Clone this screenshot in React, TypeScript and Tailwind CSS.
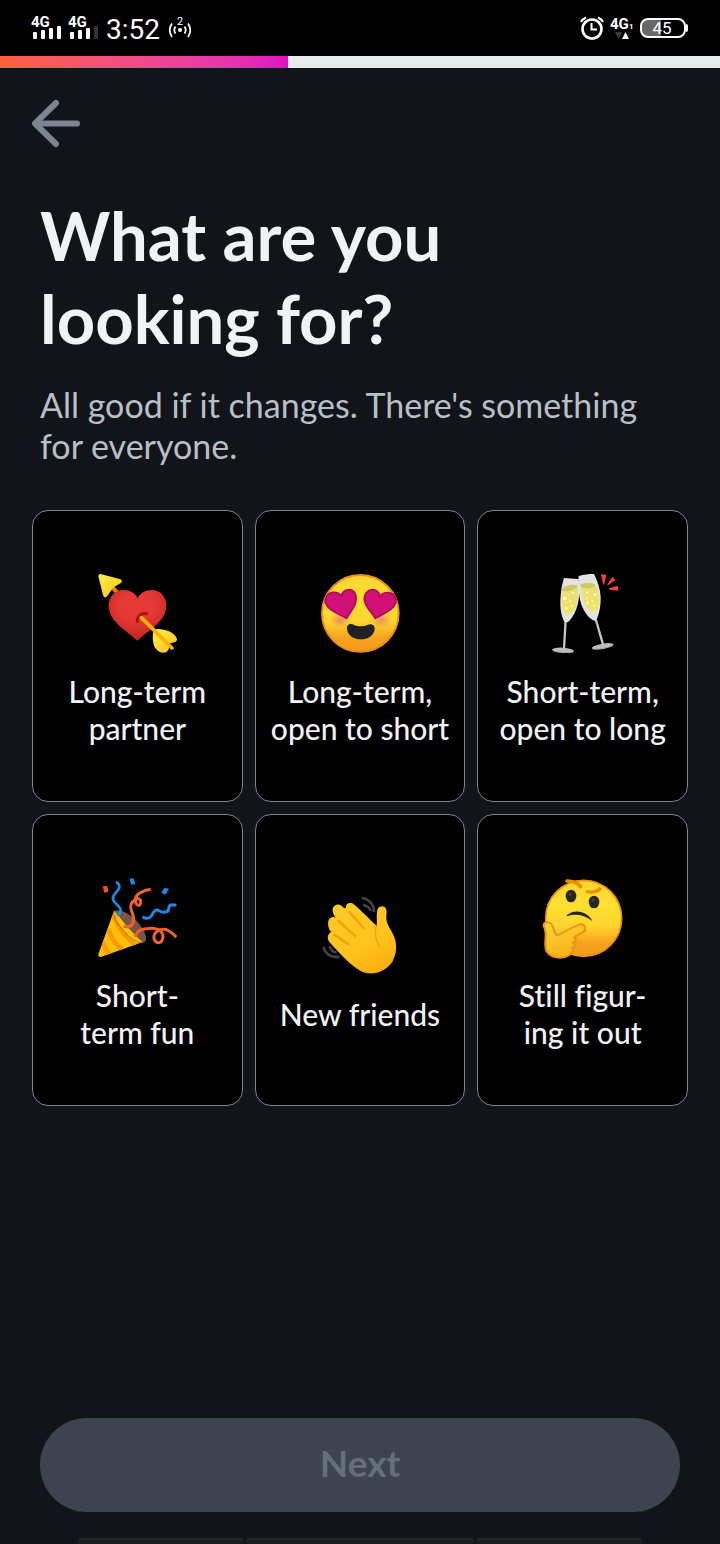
import type { ReactNode } from 'react';

function HeartArrow() {
  return (
    <svg viewBox="53 39 240 240" className="size-20" aria-hidden="true">
      <defs>
        <radialGradient id="ha-heart" cx="0.5" cy="0.3" r="0.75">
          <stop offset="0.4" stopColor="#e53935" />
          <stop offset="1" stopColor="#c01f22" />
        </radialGradient>
        <linearGradient id="ha-gold" x1="0" y1="0" x2="1" y2="1">
          <stop offset="0" stopColor="#fff04a" />
          <stop offset="1" stopColor="#f9c01c" />
        </linearGradient>
      </defs>
      <path d="M95 78L122 106" stroke="#f57c00" strokeWidth="12" />
      <path
        d="M63 42L121 57Q133 62 125 69L108 79Q100 83 96 91L84 108Q75 118 71 105L57 49Q57 42 63 42Z"
        fill="url(#ha-gold)"
      />
      <path
        d="M174 242C138 209 88 183 88 137C88 108 108 90 132 90C152 90 167 99 175 114C183 99 198 90 217 90C242 90 261 109 261 137C261 182 212 208 174 242Z"
        fill="url(#ha-heart)"
      />
      <path d="M174 188C171 168 187 156 206 162" fill="none" stroke="#a31515" strokeWidth="9" />
      <path
        d="M223 208C248 203 286 214 293 237C294 246 282 248 273 249C271 259 268 273 260 277C249 281 234 274 227 263C219 249 219 229 223 208Z"
        fill="url(#ha-gold)"
      />
      <path d="M186 173L278 264" stroke="#ffb300" strokeWidth="11" strokeLinecap="round" />
    </svg>
  );
}

function FaceGradient({ id }: { id: string }) {
  return (
    <linearGradient id={id} x1="0" y1="0" x2="0" y2="1">
      <stop offset="0" stopColor="#fbd431" />
      <stop offset="0.3" stopColor="#fde030" />
      <stop offset="0.6" stopColor="#fdd52f" />
      <stop offset="0.82" stopColor="#f7a31f" />
      <stop offset="1" stopColor="#f59a1d" />
    </linearGradient>
  );
}

function HeartEyes() {
  return (
    <svg viewBox="61 39 240 240" className="size-20" aria-hidden="true">
      <defs>
        <FaceGradient id="he-face" />
        <radialGradient id="he-blush">
          <stop offset="0" stopColor="#ed7770" stopOpacity="0.8" />
          <stop offset="1" stopColor="#ed7770" stopOpacity="0" />
        </radialGradient>
      </defs>
      <circle cx="182" cy="160" r="115" fill="url(#he-face)" stroke="#ee9011" strokeWidth="6" />
      <ellipse cx="121" cy="180" rx="31" ry="22" fill="url(#he-blush)" />
      <ellipse cx="245" cy="180" rx="31" ry="22" fill="url(#he-blush)" />
      <g fill="#d11078" stroke="#b4055e" strokeWidth="5" strokeLinejoin="round">
        <path d="M141 175C116 160 84 151 77 128C75 111 86 98 99 97C111 96 120 101 125 108C128 98 137 89 149 89C163 90 171 103 169 119C168 142 151 156 141 175Z" />
        <path d="M227 175C217 156 196 142 194 119C193 104 202 91 216 89C230 88 238 98 241 108C247 101 257 96 269 98C283 101 291 112 288 128C282 151 252 160 227 175Z" />
      </g>
      <path
        d="M142 207C140 195 151 189 162 194C175 200 192 200 204 194C216 189 227 196 225 209C221 227 205 238 183 238C161 238 144 226 142 207Z"
        fill="#202124"
      />
    </svg>
  );
}

function Glasses() {
  return (
    <svg viewBox="54 39 240 240" className="size-20" aria-hidden="true">
      <defs>
        <linearGradient id="gl-wine" x1="0" y1="0" x2="0" y2="1">
          <stop offset="0" stopColor="#e8df7c" />
          <stop offset="1" stopColor="#f1e560" />
        </linearGradient>
      </defs>
      <path d="M122 180L117 266" stroke="#c4c4c4" strokeWidth="7" />
      <ellipse cx="114" cy="271" rx="33" ry="8" fill="#bdbdbd" transform="rotate(4 114 271)" />
      <path d="M85 273C101 278 128 278 144 277" stroke="#9a9a9a" strokeWidth="2" fill="none" />
      <path
        d="M117 54L160 57C165 81 164 107 159 130C153 157 140 178 128 187L119 187C108 169 104 140 107 109C108 88 112 70 117 54Z"
        fill="#e3e3e3"
      />
      <path
        d="M113 82C126 74 145 73 158 80C162 104 159 128 149 147C141 161 130 168 120 163C109 148 109 112 113 82Z"
        fill="url(#gl-wine)"
      />
      <path d="M112 87C123 75 143 71 158 77C151 89 128 97 112 92Z" fill="#d0c66c" />
      <path d="M212 177L234 253" stroke="#c4c4c4" strokeWidth="7" />
      <ellipse cx="233" cy="259" rx="33" ry="8" fill="#bdbdbd" transform="rotate(-10 233 259)" />
      <path d="M204 268C224 266 247 264 263 257" stroke="#9a9a9a" strokeWidth="2" fill="none" />
      <path
        d="M161 48C176 44 191 42 207 42C219 66 228 94 227 122C226 149 219 171 212 183L204 181C186 170 173 149 166 123C161 99 158 70 161 48Z"
        fill="#e3e3e3"
      />
      <path
        d="M167 74C182 66 201 67 212 73C222 95 226 121 219 143C214 158 202 156 190 146C173 129 169 101 167 74Z"
        fill="url(#gl-wine)"
      />
      <path d="M166 73C182 67 200 67 211 75C207 87 179 88 168 81Z" fill="#d0c66c" />
      <g fill="#fffbd0">
        <circle cx="119" cy="115" r="5" /><circle cx="145" cy="99" r="3" />
        <circle cx="136" cy="124" r="3" /><circle cx="124" cy="145" r="4" />
        <circle cx="141" cy="139" r="3" /><circle cx="130" cy="105" r="2" />
        <circle cx="210" cy="104" r="4" /><circle cx="185" cy="115" r="3" />
        <circle cx="201" cy="123" r="3" /><circle cx="187" cy="129" r="4" />
        <circle cx="209" cy="137" r="3" /><circle cx="187" cy="98" r="3" />
      </g>
      <path
        d="M228 43L244 44L238 72Q236 76 234 71ZM263 50L271 60L249 76Q246 76 248 71ZM279 77L280 92L254 89Q250 86 254 84Z"
        fill="#f44336"
      />
    </svg>
  );
}

function PartyPopper() {
  return (
    <svg viewBox="53 36 240 240" className="size-20" aria-hidden="true">
      <defs>
        <clipPath id="pp-cone">
          <path d="M104 137C126 162 155 202 190 231L64 276Q56 276 57 268Z" />
        </clipPath>
      </defs>
      <path d="M104 137C119 131 149 143 172 168C194 191 207 220 197 230C183 241 154 226 132 202C108 177 96 149 104 137Z" fill="#795548" />
      <g clipPath="url(#pp-cone)">
        <path d="M50 130H205V285H50Z" fill="#ffc107" />
        <path d="M102 150C109 178 135 216 171 241" fill="none" stroke="#ff9800" strokeWidth="13" />
        <path d="M86 190C95 220 112 243 136 258M70 231C76 249 84 261 94 273" fill="none" stroke="#ff9800" strokeWidth="14" />
      </g>
      <path d="M104 137C98 158 123 192 147 212C164 227 184 236 195 232" fill="none" stroke="#5d4037" strokeOpacity="0.5" strokeWidth="3" />
      <g fill="none" stroke="#1e88e5" strokeWidth="9">
        <path d="M110 51C130 63 116 76 106 87C94 102 105 112 116 122C127 132 128 143 113 151" strokeWidth="8" />
        <path d="M189 157C200 158 207 166 216 153C225 136 230 132 239 137C249 143 257 144 266 138C271 125 265 115 291 121" />
      </g>
      <path d="M151 41L162 39L168 57L155 59ZM255 69L269 71L258 89L246 83Z" fill="#1e88e5" />
      <path d="M70 64L84 63L87 81L75 83Z" fill="#f4511e" />
      <g fill="none" stroke="#f4602c" strokeWidth="9">
        <path d="M214 73C190 76 167 89 168 105C169 125 186 125 184 109C183 96 164 101 156 116C146 136 173 152 160 176C155 187 145 187 133 184" />
        <path d="M168 216C175 190 194 191 215 190C239 189 251 201 251 214C250 236 232 239 225 223C219 206 236 193 253 193C270 193 278 205 291 216" />
      </g>
    </svg>
  );
}

function WavingHand() {
  return (
    <svg viewBox="61 46 240 240" className="size-20" aria-hidden="true">
      <defs>
        <linearGradient id="wh-skin" x1="0.2" y1="0" x2="0.7" y2="1">
          <stop offset="0" stopColor="#ffca28" />
          <stop offset="0.6" stopColor="#ffc320" />
          <stop offset="1" stopColor="#fbb010" />
        </linearGradient>
      </defs>
      <g fill="none" stroke="#424446" strokeWidth="8">
        <path d="M186 52C208 54 223 71 223 94M190 73C202 75 211 82 213 91" />
        <path d="M72 198C76 219 94 232 119 228M90 196C93 209 101 215 111 215" />
      </g>
      <path
        d="M140 83C135 73 145 63 158 68C164 71 207 112 231 136C233 120 230 108 232 96C233 83 238 77 247 77C259 77 263 89 260 105C258 123 267 136 278 156C292 180 294 214 279 240C263 267 231 281 201 276C178 272 152 248 131 228L89 183C81 174 84 157 96 154C90 151 83 137 86 121C90 109 99 107 108 111C95 94 96 78 109 73C117 70 124 73 132 81Z"
        fill="url(#wh-skin)"
      />
      <g fill="none" stroke="#f2a600" strokeWidth="8" strokeLinecap="round">
        <path d="M150 95L191 141M116 120L167 167M104 162L145 190" />
        <path d="M229 139C224 159 229 181 240 199" strokeWidth="4" />
      </g>
      <path d="M89 183L131 228C152 248 178 272 201 276C231 281 263 267 279 240" fill="none" stroke="#f5a800" strokeWidth="3" />
    </svg>
  );
}

function Thinking() {
  return (
    <svg viewBox="54 36 240 240" className="size-20 overflow-visible" aria-hidden="true">
      <defs>
        <FaceGradient id="th-face" />
        <linearGradient id="th-hand" x1="0" y1="0" x2="0.5" y2="1">
          <stop offset="0" stopColor="#fdd835" />
          <stop offset="1" stopColor="#f9b21c" />
        </linearGradient>
      </defs>
      <circle cx="176" cy="160" r="114" fill="url(#th-face)" stroke="#ee9011" strokeWidth="5" />
      <path d="M126 48C142 48 158 53 167 65" fill="none" stroke="#eb8f00" strokeWidth="11" strokeLinecap="round" />
      <path d="M187 80C204 83 217 80 225 71" fill="none" stroke="#eb8f00" strokeWidth="10" strokeLinecap="round" />
      <ellipse cx="138" cy="93" rx="16" ry="19" fill="#29251f" />
      <ellipse cx="207" cy="111" rx="16" ry="19" fill="#29251f" />
      <ellipse cx="135" cy="88" rx="4" ry="5" fill="#504536" />
      <ellipse cx="205" cy="105" rx="4" ry="5" fill="#504536" />
      <path d="M126 150C152 130 188 140 202 168C177 148 150 146 128 153Q123 154 126 150Z" fill="#29251f" />
      <path
        d="M59 190C51 176 61 169 73 173C89 180 85 207 97 211C116 204 140 186 165 178C177 175 187 191 176 201C166 207 153 211 148 217C156 222 152 232 145 233C152 239 150 247 143 248C149 255 140 265 131 271C111 283 76 280 64 257C57 240 63 222 62 204Z"
        fill="url(#th-hand)"
        stroke="#e99414"
        strokeWidth="6"
      />
    </svg>
  );
}

function Signal({ level, label }: { level: number; label: string }) {
  return (
    <svg viewBox="0 0 32 28" className="h-7 w-8" role="img" aria-label={label}>
      <text x="0" y="13" fill="#fff" fontFamily="Roboto, sans-serif" fontWeight="700" fontSize="15">4G</text>
      {[7, 9, 11, 13].map((h, i) => (
        <rect key={h} x={2 + i * 8} y={25 - h} width="4" height={h} rx="1" fill={i < level ? '#fff' : '#333'} />
      ))}
    </svg>
  );
}

function StatusBar() {
  return (
    <div className="flex h-14 items-center justify-between bg-black pr-8 pl-[31px] font-[Roboto,sans-serif] text-white">
      <div className="flex items-center">
        <Signal level={4} label="SIM 1" />
        <span className="w-[5px]" />
        <Signal level={3} label="SIM 2" />
        <span className="ml-1.5 pt-1 text-[28px] leading-8">3:52</span>
        <svg viewBox="0 0 24 24" className="ml-2 size-6" fill="none" stroke="#fff" strokeWidth="1.8" aria-hidden="true">
          <text x="9" y="9" fill="#fff" stroke="none" fontFamily="Roboto, sans-serif" fontSize="11">2</text>
          <circle cx="12" cy="14" r="2" fill="#fff" stroke="none" />
          <path d="M7.500 10.500Q5 14 7.500 17.500M16.500 10.500Q19 14 16.500 17.500M4 7.500Q-0.500 14 4 21M20 7.500Q24.500 14 20 21" />
        </svg>
      </div>
      <div className="flex items-center">
        <svg viewBox="0 0 24 24" className="size-6" fill="none" stroke="#fff" aria-hidden="true">
          <circle cx="12" cy="13" r="9.500" strokeWidth="2.600" />
          <path d="M11.500 7V13.500H17" strokeWidth="2" />
          <path d="M1 6Q2.500 3 6 1.500M18 1.500Q21.500 3 23 6" strokeWidth="2" />
        </svg>
        <svg viewBox="0 0 24 28" className="ml-1.5 h-7 w-6" role="img" aria-label="Mobile data">
          <text x="0" y="15" fill="#fff" fontFamily="Roboto, sans-serif" fontWeight="700" fontSize="15">4G</text>
          <text x="19" y="15" fill="#fff" fontFamily="Roboto, sans-serif" fontWeight="700" fontSize="8">1</text>
          <path d="M5 18H12L8.500 25Z" fill="#3c3c3c" />
          <path d="M12 25H19L15.500 18Z" fill="#fff" />
        </svg>
        <div className="ml-1.5 flex items-center">
          <div className="flex h-5 w-[46px] items-center justify-center rounded-lg border-2 border-white bg-linear-to-r from-[#686868] from-45% to-black to-45% pr-0.5 text-[17px] leading-none">
            45
          </div>
          <span className="h-2 w-0.5 rounded-r bg-white" />
        </div>
      </div>
    </div>
  );
}

type Option = { id: string; icon: ReactNode; lines: string[] };

const options: Option[] = [
  { id: 'long', icon: <HeartArrow />, lines: ['Long-term', 'partner'] },
  { id: 'long-open', icon: <HeartEyes />, lines: ['Long-term,', 'open to short'] },
  { id: 'short-open', icon: <Glasses />, lines: ['Short-term,', 'open to long'] },
  { id: 'short', icon: <PartyPopper />, lines: ['Short-', 'term fun'] },
  { id: 'friends', icon: <WavingHand />, lines: ['New friends'] },
  { id: 'unsure', icon: <Thinking />, lines: ['Still figur-', 'ing it out'] },
];

export default function App() {
  return (
    <div className="flex min-h-screen flex-col bg-[#111418] font-[Lato,sans-serif] [font-variant-ligatures:none]">
      <StatusBar />
      <div role="progressbar" aria-label="Profile setup" aria-valuenow={40} aria-valuemin={0} aria-valuemax={100} className="h-3 bg-[#e9eaee]">
        <div className="h-full w-2/5 bg-linear-to-r from-[#ff6036] to-[#e00fc5]" />
      </div>
      <main className="flex grow flex-col px-8 pt-8">
        <button type="button" aria-label="Back" className="size-12">
          <svg viewBox="0 0 48 48" fill="none" stroke="#7c8591" strokeWidth="6" strokeLinecap="round" strokeLinejoin="round" className="size-12">
            <path d="M24 3L3 23.500L24 44" />
            <path d="M4 23.500H45" />
          </svg>
        </button>
        <div className="mt-[46px] px-2">
          <h1 className="text-[67px] leading-[83px] font-bold text-[#f0f2f4]">
            What are you
            <br />
            looking for?
          </h1>
          <p className="mt-6 text-[34px] leading-[41px] text-[#b9bfc8]">
            All good if it changes. There's something for everyone.
          </p>
        </div>
        <div className="mt-11 grid grid-cols-3 gap-3">
          {options.map(({ id, icon, lines }) => (
            <button
              key={id}
              type="button"
              className="flex h-[292px] flex-col items-center justify-center gap-5 rounded-2xl border border-[#7c8591] bg-black pt-2 text-[30px] leading-[37px] font-medium whitespace-nowrap text-[#f0f2f4]"
            >
              {icon}
              <span>
                {lines.map((line) => (
                  <span key={line} className="block">{line}</span>
                ))}
              </span>
            </button>
          ))}
        </div>
        <div className="mt-auto px-2 pt-8">
          <button type="button" disabled className="h-[94px] w-full rounded-full bg-[#3e444f] pb-1 text-[37px] font-bold text-[#656e7b]">
            Next
          </button>
        </div>
      </main>
      <div className="mx-auto mt-[26px] grid h-1.5 w-[564px] max-w-full grid-cols-[8fr_11fr_8fr] gap-0.5">
        <span className="rounded-t border-t-2 border-[#24262b] bg-[#1a1c20]" />
        <span className="rounded-t border-t-2 border-[#24262b] bg-[#1a1c20]" />
        <span className="rounded-t border-t-2 border-[#24262b] bg-[#1a1c20]" />
      </div>
    </div>
  );
}
